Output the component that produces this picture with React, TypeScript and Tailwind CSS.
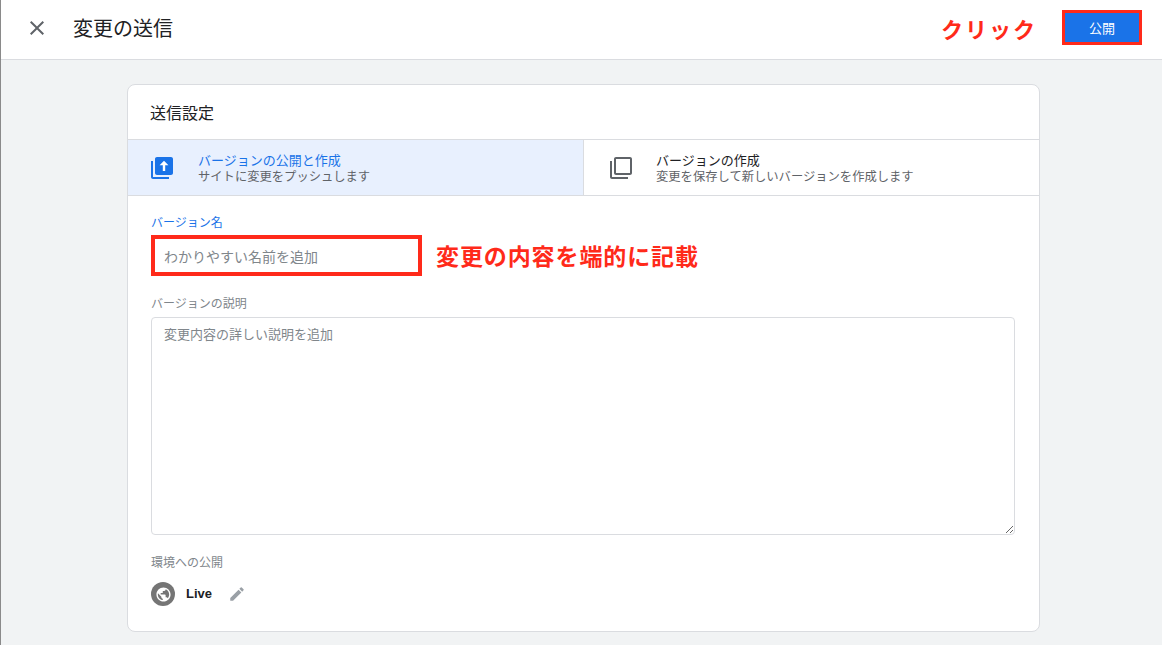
import { useState } from "react";

const font = { fontFamily: '"Noto Sans CJK JP", "Noto Sans", sans-serif' };

function CloseIcon() {
  return (
    <svg viewBox="0 0 24 24" className="w-6 h-6 fill-[#5f6368]">
      <path d="M19 6.41 17.59 5 12 10.59 6.41 5 5 6.41 10.59 12 5 17.59 6.41 19 12 13.41 17.59 19 19 17.59 13.41 12z" />
    </svg>
  );
}

function PublishStackIcon() {
  return (
    <svg viewBox="0 0 24 24" className="w-6 h-6">
      <path
        className="fill-[#1a73e8]"
        d="M3 5H1v16c0 1.1.9 2 2 2h16v-2H3V5zm18-4H7c-1.1 0-2 .9-2 2v14c0 1.1.9 2 2 2h14c1.1 0 2-.9 2-2V3c0-1.1-.9-2-2-2z"
      />
      <path className="fill-white" d="M14 4.8 9.6 9.2h3.2V15h2.4V9.2h3.2z" />
    </svg>
  );
}

function StackIcon() {
  return (
    <svg viewBox="0 0 24 24" className="w-6 h-6 fill-[#5f6368]">
      <path d="M3 5H1v16c0 1.1.9 2 2 2h16v-2H3V5zm18-4H7c-1.1 0-2 .9-2 2v14c0 1.1.9 2 2 2h14c1.1 0 2-.9 2-2V3c0-1.1-.9-2-2-2zm0 16H7V3h14v14z" />
    </svg>
  );
}

function GlobeBadge() {
  return (
    <div className="w-6 h-6 rounded-full bg-[#757575] flex items-center justify-center">
      <svg viewBox="0 0 24 24" className="w-[17px] h-[17px] fill-white">
        <path d="M12 2C6.48 2 2 6.48 2 12s4.48 10 10 10 10-4.48 10-10S17.52 2 12 2zm-1 17.93c-3.95-.49-7-3.85-7-7.93 0-.62.08-1.21.21-1.79L9 15v1c0 1.1.9 2 2 2v1.93zm6.9-2.54c-.26-.81-1-1.39-1.9-1.39h-1v-3c0-.55-.45-1-1-1H8v-2h2c.55 0 1-.45 1-1V7h2c1.1 0 2-.9 2-2v-.41c2.93 1.19 5 4.06 5 7.41 0 2.08-.8 3.97-2.1 5.39z" />
      </svg>
    </div>
  );
}

function PencilIcon() {
  return (
    <svg viewBox="0 0 24 24" className="w-[18px] h-[18px] fill-[#9aa0a6]">
      <path d="M3 17.25V21h3.75L17.81 9.94l-3.75-3.75L3 17.25zM20.71 7.04a.996.996 0 0 0 0-1.41l-2.34-2.34a.996.996 0 0 0-1.41 0l-1.83 1.83 3.75 3.75 1.83-1.83z" />
    </svg>
  );
}

export default function App() {
  const [name, setName] = useState("");
  const [desc, setDesc] = useState("");

  return (
    <div
      className="w-full h-[645px] bg-[#f1f3f4] border-l border-[#8a8a8a] overflow-hidden"
      style={font}
    >
      {/* Header */}
      <div className="h-[60px] bg-white border-b border-[#dadce0] flex items-center pl-[24px] pr-[20px] pb-[4px]">
        <button className="w-6 h-6 flex items-center justify-center">
          <CloseIcon />
        </button>
        <h1 className="ml-[24px] text-[20px] text-[#202124] leading-none">変更の送信</h1>
        <div className="ml-auto flex items-center">
          <span className="text-[22px] font-bold text-[#ff2a1a] tracking-[2px] leading-none">
            クリック
          </span>
          <div className="ml-[25px] border-[3px] border-[#ff2a1a] w-[80px] h-[35px]">
            <button className="w-full h-full bg-[#1a73e8] text-white text-[13px]">公開</button>
          </div>
        </div>
      </div>

      {/* Card */}
      <div className="ml-[126px] mt-[24px] w-[913px] bg-white border border-[#dadce0] rounded-lg">
        <div className="h-[54px] flex items-center px-[22px] text-[16px] text-[#202124]">
          送信設定
        </div>

        <div className="flex h-[57px] border-y border-[#dadce0]">
          <div className="w-[456px] bg-[#e8f0fe] border-r border-[#dadce0] flex items-center pl-[22px]">
            <PublishStackIcon />
            <div className="ml-[24px] leading-[17px]">
              <div className="text-[13px] text-[#1a73e8]">バージョンの公開と作成</div>
              <div className="text-[12.3px] text-[#5f6368]">サイトに変更をプッシュします</div>
            </div>
          </div>
          <div className="flex-1 flex items-center pl-[25px]">
            <StackIcon />
            <div className="ml-[23px] leading-[17px]">
              <div className="text-[13px] text-[#202124]">バージョンの作成</div>
              <div className="text-[12.3px] text-[#5f6368]">
                変更を保存して新しいバージョンを作成します
              </div>
            </div>
          </div>
        </div>

        <div className="pl-[23px] pr-[24px] pt-[18px] pb-[25px]">
          <div className="text-[12px] text-[#1a73e8] leading-[16px]">バージョン名</div>
          <div className="mt-[5px] flex items-center">
            <input
              value={name}
              onChange={(e) => setName(e.target.value)}
              placeholder="わかりやすい名前を追加"
              className="w-[271px] h-[41px] border-[4px] border-[#ff2a1a] px-[9px] text-[14px] text-[#202124] placeholder:text-[#80868b] outline-none"
            />
            <span className="ml-[14px] text-[23px] font-bold text-[#ff2a1a] tracking-[0.9px] leading-none">
              変更の内容を端的に記載
            </span>
          </div>

          <div className="mt-[19px] text-[12px] text-[#80868b] leading-[16px]">バージョンの説明</div>
          <textarea
            value={desc}
            onChange={(e) => setDesc(e.target.value)}
            placeholder="変更内容の詳しい説明を追加"
            className="mt-[6px] block w-full h-[218px] border border-[#dadce0] rounded px-3 py-[6px] text-[13px] text-[#202124] placeholder:text-[#80868b] outline-none"
          />

          <div className="mt-[19px] text-[12px] text-[#80868b] leading-[16px]">環境への公開</div>
          <div className="mt-[12px] flex items-center h-6">
            <GlobeBadge />
            <span
              className="ml-[11px] text-[13px] font-bold text-[#202124]"
              style={{ fontFamily: '"Liberation Sans", sans-serif' }}
            >
              Live
            </span>
            <span className="ml-[16px]">
              <PencilIcon />
            </span>
          </div>
        </div>
      </div>
    </div>
  );
}
